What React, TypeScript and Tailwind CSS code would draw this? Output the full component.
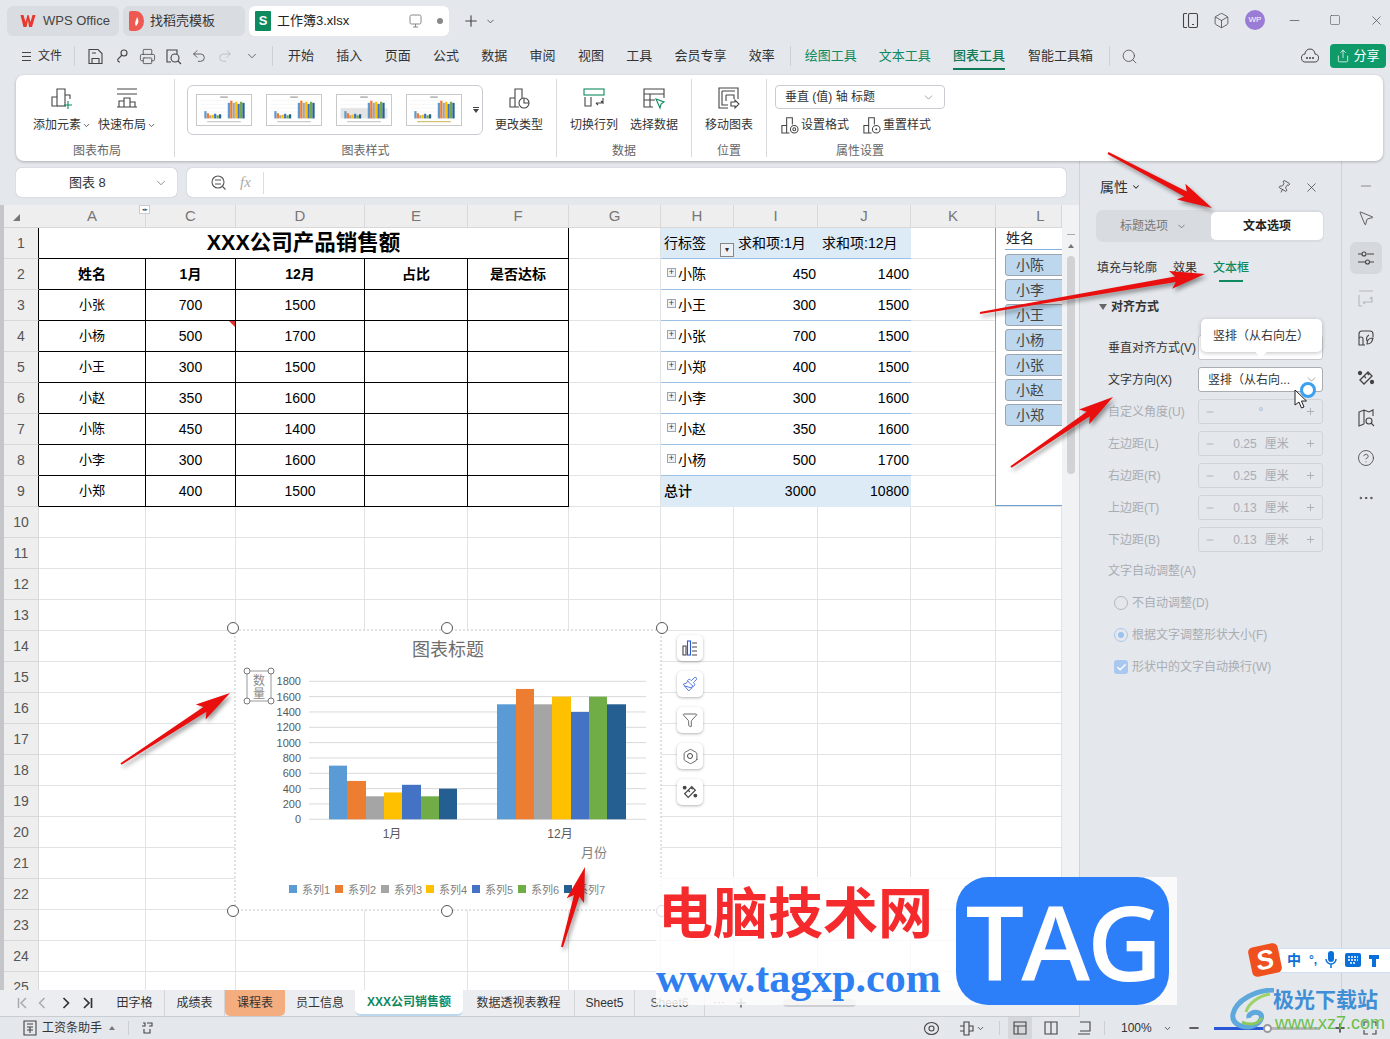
import React from 'react';
import { ChevronDown, Minus, Square, X, Search, Printer, Undo2, Redo2, Plus, Pin, MousePointer2, CircleHelp, Ellipsis, Funnel, Paintbrush, Hexagon, Share, Box, Check } from 'lucide-react';

const S = ({ w = 20, h = 20, vb = '0 0 20 20', c = 'currentColor', sw = 1.1, children, className = '' }: any) => (
  <svg width={w} height={h} viewBox={vb} fill="none" stroke={c} strokeWidth={sw} className={className}>{children}</svg>
);

const BarsBase = () => <path d="M2 20v-9h5v9zM7 11V3h8v17M15 9h5v4" />;
const AddEl = () => (
  <S w={24} h={24} vb="0 0 24 24" c="#444"><BarsBase /><path d="M7 20h9" /><path d="M18 15v8M14 19h8" stroke="#0f8a5f" /></S>
);
const Layout = () => (
  <S w={24} h={24} vb="0 0 24 24" c="#444"><path d="M2 3h20M2 8h20M2 21h20M4 21v-6h5v6M9 21V12h6v9M15 21v-5h5v5" /></S>
);
const ChangeType = () => (
  <S w={24} h={24} vb="0 0 24 24" c="#444"><path d="M3 21v-9h5v9zM8 12V3h7v9M8 21h4" /><circle cx="17" cy="17" r="5" /><path d="M17 12v5h5" /></S>
);
const SwitchRC = () => (
  <S w={24} h={24} vb="0 0 24 24" c="#444"><rect x="2" y="3" width="20" height="6" stroke="#0f8a5f" /><path d="M3 11v9h6v-9M14 17h7l-2-2M21 17v-5M14 17l2 2" /></S>
);
const SelectData = () => (
  <S w={24} h={24} vb="0 0 24 24" c="#444"><path d="M11 21H2V3h20v9M2 8h20M2 14h11M8 8v13" /><path d="M14 13l8 3-3 2-1 4z" stroke="#0f8a5f" /></S>
);
const MoveChart = () => (
  <S w={24} h={24} vb="0 0 24 24" c="#444"><path d="M11 22H2V2h19v11M5 5h13M5 5v14h6M9 9h8v4M9 9v6" /><path d="M14 16h4v-2l4 4-4 4v-2h-4z" /></S>
);
const SmallSet = ({ reset }: { reset?: boolean }) => (
  <S w={19} h={19} vb="0 0 20 20" c="#444"><path d="M2 19v-8h5v8zM7 11V3h6v7M7 19h3" /><circle cx="15" cy="15" r="4" /><circle cx="15" cy="15" r={reset ? 0.5 : 1.5} /></S>
);

const Thumb = ({ v }: { v: number }) => {
  const a = [700, 500, 300, 350, 450, 300, 400];
  const b = [1500, 1700, 1500, 1600, 1400, 1600, 1500];
  const c = ['#5b9bd5', '#ed7d31', '#a5a5a5', '#ffc000', '#4472c4', '#70ad47', '#255e91'];
  return (
    <svg width="56" height="32" viewBox="0 0 56 32" className="border border-[#c9c9c9] bg-white">
      <rect x="24" y="1.5" width="8" height="1.5" fill="#aaa" />
      {[6, 10, 14, 18, 22].map((y) => <line key={y} x1="3" x2="53" y1={y} y2={y} stroke="#eee" strokeWidth="0.5" />)}
      {v === 2 && <rect x="3" y="14" width="50" height="11" fill="#e4e4e4" />}
      {a.map((n, i) => <rect key={i} x={7 + i * 2.6} y={25 - n / 90} width="2.4" height={n / 90} fill={c[i]} />)}
      {b.map((n, i) => <rect key={i} x={32 + i * 2.6} y={25 - n / 90} width="2.4" height={n / 90} fill={c[i]} />)}
      <rect x="10" y="28" width="36" height="1" fill={v === 3 ? '#c8b040' : '#bbb'} />
    </svg>
  );
};

const Sep = ({ className = '' }: { className?: string }) => <div className={`w-px bg-[#cdd0d5] ${className}`} />;

const TopBar = () => (
  <div className="h-[42px] flex items-start pt-[6px] pl-[7px] relative">
    <div className="w-[112px] h-[30px] rounded-[6px] bg-[#d9dce0] flex items-center pl-[13px] gap-[7px] text-[13px] text-[#444]">
      <svg width="16" height="14" viewBox="0 0 16 14"><path d="M0.5 1h3l2 7 2-7h1l2 7 2-7h3l-3.5 12h-3L8 6l-1.500 7h-3z" fill="#e8372c" /></svg>
      <span>WPS Office</span>
    </div>
    <div className="w-[122px] h-[30px] ml-[4px] rounded-[6px] bg-[#d9dce0] flex items-center pl-[6px] gap-[6px] text-[13px] text-[#333]">
      <svg width="15" height="20" viewBox="0 0 15 20"><path d="M0 2a2 2 0 0 1 2-2h5a8 10 0 0 1 0 20H2a2 2 0 0 1-2-2z" fill="#ee5a52" /><path d="M7 15c-2-3 0-5 1-9 2 3 2 6-1 9z" fill="#fff" /></svg>
      <span>找稻壳模板</span>
    </div>
    <div className="w-[200px] h-[30px] ml-[4px] rounded-[6px] bg-white flex items-center pl-[6px] text-[13px] text-[#222]">
      <div className="w-[16px] h-[20px] bg-[#0f8a5f] text-white text-[13px] font-bold flex items-center justify-center rounded-[1px]">S</div>
      <span className="ml-[6px]">工作簿3.xlsx</span>
      <svg className="ml-[60px]" width="13" height="14" viewBox="0 0 13 14" fill="none" stroke="#888"><rect x="1" y="1" width="11" height="9" rx="1.500" /><path d="M6.500 10v3M4 13h5" /></svg>
      <div className="ml-[15px] w-[6px] h-[6px] rounded-full bg-[#888]" />
    </div>
    <Plus className="ml-[13px] mt-[6px] text-[#444]" size={18} strokeWidth={1.5} />
    <ChevronDown className="ml-[5px] mt-[10px] text-[#555]" size={11} />
    <div className="ml-auto flex items-center text-[#444] h-[28px]">
      <S w={17} h={17} vb="0 0 17 17"><path d="M5 1.500H2.500a1 1 0 0 0-1 1v12a1 1 0 0 0 1 1H5" /><rect x="6.500" y="1.500" width="9" height="14" rx="1.500" /><path d="M10 12.500h2" /></S>
      <Box className="ml-[14px]" size={17} strokeWidth={1.1} />
      <div className="ml-[15px] w-[20px] h-[20px] rounded-full bg-[#9a7bd6] text-white text-[8px] flex items-center justify-center">WP</div>
      <Minus className="ml-[22px]" size={15} strokeWidth={1.1} />
      <Square className="ml-[27px]" size={12} strokeWidth={1.1} />
      <X className="ml-[28px] mr-[6px]" size={15} strokeWidth={1.1} />
    </div>
  </div>
);

const MenuBar = () => (
  <div className="h-[33px] flex items-center text-[13px] text-[#333] pb-[5px]">
    <div className="ml-[22px] w-[9px] flex flex-col gap-[3px]">
      <div className="h-px bg-[#444] w-[9px]" /><div className="h-px bg-[#444] w-[9px]" /><div className="h-px bg-[#444] w-[9px]" />
    </div>
    <span className="ml-[7px] text-[12px]">文件</span>
    <Sep className="h-[20px] ml-[12px]" />
    <div className="flex items-center gap-[9px] ml-[12px] text-[#444]">
      <S w={17} h={17} vb="0 0 17 17" c="#444"><path d="M2 1.500h9l4 4v10H2zM5 15.500v-5h7v5M5 5h4" /></S>
      <S w={17} h={17} vb="0 0 17 17" c="#444"><circle cx="11" cy="5" r="3" /><path d="M9 7l-4 4a2 2 0 0 0 2 3" /></S>
      <Printer size={17} strokeWidth={1.1} />
      <S w={17} h={17} vb="0 0 17 17" c="#444"><path d="M6 14H2V2h10v4" /><circle cx="10" cy="10" r="4" /><path d="M13 13l3 3" /></S>
      <Undo2 size={16} strokeWidth={1.2} />
      <Redo2 size={16} strokeWidth={1.2} className="text-[#b5b8bc] ml-[1px]" />
      <ChevronDown size={14} strokeWidth={1.3} className="ml-[3px]" />
    </div>
    <Sep className="h-[20px] ml-[13px]" />
    <div className="flex items-center gap-[22.3px] ml-[15px]">
      <span>开始</span><span>插入</span><span>页面</span><span>公式</span><span>数据</span><span>审阅</span><span>视图</span><span>工具</span><span>会员专享</span><span>效率</span>
    </div>
    <Sep className="h-[20px] ml-[15px]" />
    <div className="flex items-center gap-[22px] ml-[14px]">
      <span className="text-[#0f8a5f]">绘图工具</span>
      <span className="text-[#0f8a5f]">文本工具</span>
      <span className="text-[#0f7a55] font-medium relative">图表工具<span className="absolute left-0 right-0 -bottom-[4px] h-[2px] bg-[#0f7a55]" /></span>
      <span className="ml-px">智能工具箱</span>
    </div>
    <Sep className="h-[20px] ml-[16px]" />
    <Search className="ml-[11px] text-[#444]" size={17} strokeWidth={1.1} />
    <svg className="ml-[163px]" width="18" height="16" viewBox="0 0 18 16" fill="none" stroke="#444"><path d="M5 14a4 4 0 0 1-1-8 5 5 0 0 1 10 0 4 4 0 0 1-1 8z" /><circle cx="6" cy="10" r=".6" fill="#444" /><circle cx="9" cy="10" r=".6" fill="#444" /><circle cx="12" cy="10" r=".6" fill="#444" /></svg>
    <div className="ml-[11px] w-[56px] h-[24px] rounded-[4px] bg-[#0e9a69] text-white flex items-center justify-center gap-[3px]">
      <Share size={14} strokeWidth={1.3} /><span className="text-[13px]">分享</span>
    </div>
  </div>
);

const RB = ({ icon, label, caret, w }: any) => (
  <div className={`flex flex-col items-center ${w}`}>
    <div className="h-[24px] mt-[7px]">{icon}</div>
    <div className="mt-[6px] text-[12px] leading-[18px] text-[#333] flex items-center whitespace-nowrap">{label}{caret && <ChevronDown size={9} strokeWidth={2} className="ml-[1px]" />}</div>
  </div>
);

const GroupLabel = ({ children }: any) => (
  <div className="h-[16px] text-center text-[12px] text-[#666] leading-[16px] whitespace-nowrap">{children}</div>
);

const Group = ({ w, label, children, cls = '' }: any) => (
  <div className={`${w} h-[78px] flex flex-col relative border-r border-[#d8dade]`}>
    <div className="h-[64px] shrink-0 flex">{children}</div>
    <div className={cls}><GroupLabel>{label}</GroupLabel></div>
  </div>
);

const Ribbon = () => (
  <div className="relative z-10 ml-[16px] mr-[7px] h-[86px] bg-white rounded-[8px] shadow-[0_1px_3px_rgba(0,0,0,0.25)] flex py-[4px]">
    <Group w="w-[159px]" label="图表布局" cls="pl-[4px]">
      <div className="flex pl-[16px]">
        <RB icon={<AddEl />} label="添加元素" caret w="w-[60px]" />
        <RB icon={<Layout />} label="快速布局" caret w="w-[70px]" />
      </div>
    </Group>
    <Group w="w-[382px]" label="图表样式">
      <div className="ml-[12px] mt-[6px] w-[296px] h-[50px] border border-[#c9ccd1] rounded-[6px] flex items-center pl-[8px] gap-[14px] relative">
        <Thumb v={0} /><Thumb v={1} /><Thumb v={2} /><Thumb v={3} />
        <div className="absolute right-[3px] top-[21px] flex flex-col items-center">
          <div className="w-[6px] h-px bg-[#444] mb-[1px]" />
          <div className="w-0 h-0 border-l-[3px] border-r-[3px] border-t-[4px] border-l-transparent border-r-transparent border-t-[#444]" />
        </div>
      </div>
      <RB icon={<ChangeType />} label="更改类型" w="w-[72px]" />
    </Group>
    <Group w="w-[135px]" label="数据">
      <div className="flex pl-[7px]">
        <RB icon={<SwitchRC />} label="切换行列" w="w-[60px]" />
        <RB icon={<SelectData />} label="选择数据" w="w-[60px]" />
      </div>
    </Group>
    <Group w="w-[75px]" label="位置">
      <RB icon={<MoveChart />} label="移动图表" w="w-full" />
    </Group>
    <div className="w-[190px] h-[78px] flex flex-col">
      <div className="h-[64px] shrink-0 pl-[8px] pt-[6px]">
        <div className="w-[170px] h-[24px] border border-[#c9ccd1] rounded-[4px] flex items-center justify-between px-[9px] text-[12px] text-[#333]">
          <span>垂直 (值) 轴 标题</span><ChevronDown size={13} strokeWidth={1.1} className="text-[#666]" />
        </div>
        <div className="flex items-center mt-[6px] text-[12px] text-[#333] pl-[5px]">
          <SmallSet /><span className="ml-[2px]">设置格式</span>
          <span className="ml-[13px]"><SmallSet reset /></span><span className="ml-[2px]">重置样式</span>
        </div>
      </div>
      <div className="-ml-[4px]"><GroupLabel>属性设置</GroupLabel></div>
    </div>
  </div>
);

const COLS = ['A', 'C', 'D', 'E', 'F', 'G', 'H', 'I', 'J', 'K', 'L'];
const TABLE = [
  ['小张', '700', '1500'], ['小杨', '500', '1700'], ['小王', '300', '1500'], ['小赵', '350', '1600'],
  ['小陈', '450', '1400'], ['小李', '300', '1600'], ['小郑', '400', '1500'],
];
const PIVOT = [
  ['小陈', '450', '1400'], ['小王', '300', '1500'], ['小张', '700', '1500'], ['小郑', '400', '1500'],
  ['小李', '300', '1600'], ['小赵', '350', '1600'], ['小杨', '500', '1700'],
];

const Sheet = () => {
  const cells: React.ReactNode[] = [];
  const g = 'border-r border-b border-[#e2e3e5]';
  const bk = 'border-r border-b border-black';
  cells.push(
    <div key="corner" className="bg-[#eeeeee] flex items-center justify-center border-b border-[#d5d5d5]">
      <div className="w-0 h-0 border-l-[7px] border-b-[7px] border-l-transparent border-b-[#777] mr-[10px] mt-[2px]" />
    </div>,
  );
  COLS.forEach((c) =>
    cells.push(
      <div key={c} className={`bg-[#eeeeee] border-r border-b border-[#d8d8d8] flex items-center justify-center text-[15px] text-[#777] relative ${c === 'L' ? 'pl-[24px]' : ''}`}>
        {c}
        {c === 'A' && <div className="absolute -right-[5px] top-0 w-[11px] h-[9px] bg-white border border-[#ccc] flex items-center justify-center text-[5px] text-[#444] leading-none z-10">◂▸</div>}
      </div>,
    ),
  );
  for (let r = 1; r <= 25; r++) {
    const inTable = r <= 9;
    cells.push(
      <div key={`r${r}`} className={`bg-[#eeeeee] flex items-center justify-center text-[14px] text-[#555] border-b border-[#d8d8d8] ${inTable ? 'border-r border-r-black' : 'border-r border-r-[#d8d8d8]'}`}>{r}</div>,
    );
    if (r === 1) {
      cells.push(<div key="title" className={`col-span-5 ${bk} flex items-center justify-center text-[21.5px] font-bold text-black`}>XXX公司产品销售额</div>);
    } else if (r === 2) {
      ['姓名', '1月', '12月', '占比', '是否达标'].forEach((t) => cells.push(<div key={t} className={`${bk} flex items-center justify-center text-[14px] font-bold text-black`}>{t}</div>));
    } else if (inTable) {
      const row = TABLE[r - 3];
      row.forEach((t, i) =>
        cells.push(
          <div key={`${r}-${i}`} className={`${bk} flex items-center justify-center ${i === 0 ? 'text-[13px]' : 'text-[14px]'} text-black relative`}>
            {t}
            {r === 4 && i === 1 && <div className="absolute right-0 top-0 w-0 h-0 border-l-[6px] border-t-[6px] border-l-transparent border-t-[#e03030]" />}
          </div>,
        ),
      );
      cells.push(<div key={`${r}-e`} className={bk} />, <div key={`${r}-f`} className={bk} />);
    } else {
      for (let i = 0; i < 5; i++) cells.push(<div key={`${r}-t${i}`} className={g} />);
    }
    cells.push(<div key={`${r}-g`} className={g} />);
    const pb = 'border-b border-[#9bc2e6]';
    if (r === 1) {
      cells.push(
        <div key="ph" className={`bg-[#ddebf7] ${pb} flex items-center pl-[3px] text-[14px] text-black relative`}>行标签
          <div className="absolute right-0 bottom-[1px] w-[14px] h-[14px] border border-[#888] bg-[#eef1f5] text-[8px] leading-[12px] text-center text-[#333]">▾</div>
        </div>,
        <div key="pi" className={`bg-[#ddebf7] ${pb} flex items-center pl-[4px] text-[14px] text-black`}>求和项:1月</div>,
        <div key="pj" className={`bg-[#ddebf7] ${pb} flex items-center pl-[4px] text-[14px] text-black`}>求和项:12月</div>,
      );
    } else if (r <= 8) {
      const p = PIVOT[r - 2];
      cells.push(
        <div key={`${r}-ph`} className={`${pb} flex items-center text-[14px] text-black pl-[6px]`}>
          <span className="w-[9px] h-[9px] border border-[#9aa5b5] bg-[#eef2f8] mr-[2px] mb-[4px] flex items-center justify-center text-[9px] leading-none text-[#334]">+</span>{p[0]}
        </div>,
        <div key={`${r}-pi`} className={`${pb} flex items-center justify-end pr-[2px] text-[14px] text-black`}>{p[1]}</div>,
        <div key={`${r}-pj`} className={`${pb} flex items-center justify-end pr-[2px] text-[14px] text-black`}>{p[2]}</div>,
      );
    } else if (r === 9) {
      cells.push(
        <div key="tot" className="bg-[#ddebf7] flex items-center pl-[3px] text-[14px] font-medium text-black">总计</div>,
        <div key="toti" className="bg-[#ddebf7] flex items-center justify-end pr-[2px] text-[14px] text-black">3000</div>,
        <div key="totj" className="bg-[#ddebf7] flex items-center justify-end pr-[2px] text-[14px] text-black">10800</div>,
      );
    } else {
      cells.push(<div key={`${r}-h`} className={g} />, <div key={`${r}-i`} className={g} />, <div key={`${r}-j`} className={g} />);
    }
    cells.push(<div key={`${r}-k`} className={g} />, <div key={`${r}-l`} className={g} />);
  }
  return (
    <div className="flex h-[785px] overflow-hidden">
      <div className="w-[4px] bg-[#c4c6c9] shrink-0" />
      <div className="w-[1058px] bg-white grid grid-cols-[35px_107px_90px_129px_103px_101px_92px_73px_84px_93px_85px_66px] grid-rows-[23px] auto-rows-[31px]">
        {cells}
      </div>
      <div className="w-[17px] bg-[#f1f2f3] flex flex-col items-center pt-[29px]">
        <div className="w-[8px] h-px bg-[#aaa]" />
        <div className="mt-[9px] w-0 h-0 border-l-[3px] border-r-[3px] border-b-[4px] border-l-transparent border-r-transparent border-b-[#777]" />
        <div className="mt-[8px] w-[8px] h-[218px] rounded-full bg-[#d0d2d5]" />
      </div>
    </div>
  );
};

const FormulaBar = () => (
  <div className="pt-[7px] pl-[16px] pr-[13px] flex gap-[10px] h-[44px]">
    <div className="w-[161px] h-[29px] bg-white rounded-[5px] shadow-[0_0_1px_rgba(0,0,0,0.4)] flex items-center text-[13px] text-[#333] relative">
      <span className="ml-[53px]">图表 8</span>
      <ChevronDown size={14} strokeWidth={1.1} className="absolute right-[9px] text-[#555]" />
    </div>
    <div className="flex-1 h-[29px] bg-white rounded-[5px] shadow-[0_0_1px_rgba(0,0,0,0.4)] flex items-center pl-[23px]">
      <S w={17} h={17} vb="0 0 17 17" c="#555"><circle cx="8" cy="8" r="6" /><path d="M12.500 12.500l3 3M5 6h6M5 10h6" /></S>
      <span className="ml-[13px] italic text-[15px] text-[#aaa] [font-family:'Liberation_Serif',serif]">fx</span>
      <div className="ml-[12px] h-[22px] w-px bg-[#ddd]" />
    </div>
  </div>
);

const Tab = ({ w, children, cls = '' }: any) => (
  <div className={`${w} h-[26px] flex items-center justify-center text-[12px] text-[#333] border-r border-[#d3d5d9] whitespace-nowrap ${cls}`}>{children}</div>
);

const TabBar = () => (
  <div className="h-[27px] bg-[#ebedf0] border-b border-[#c9ccd0] flex items-start">
    <div className="w-[105px] h-[26px] flex items-center pl-[17px] text-[#333]">
      <S w={10} h={12} vb="0 0 10 12" c="#aaa" sw={1.5}><path d="M1.500 1v10M9 1L4 6l5 5" /></S>
      <S w={8} h={12} vb="0 0 8 12" c="#aaa" sw={1.5} className="ml-[11px]"><path d="M6.500 1L1.500 6l5 5" /></S>
      <S w={8} h={12} vb="0 0 8 12" sw={1.7} className="ml-[16px]"><path d="M1.500 1l5 5-5 5" /></S>
      <S w={10} h={12} vb="0 0 10 12" sw={1.7} className="ml-[13px]"><path d="M1 1l5 5-5 5M8.500 1v10" /></S>
    </div>
    <Tab w="w-[60px]">田字格</Tab>
    <Tab w="w-[60px]">成绩表</Tab>
    <Tab w="w-[60px]" cls="bg-[#f4ad7f] rounded-b-[5px] border-r-0">课程表</Tab>
    <Tab w="w-[70px]" cls="border-r-0">员工信息</Tab>
    <div className="w-[108px] h-[26px] bg-white rounded-b-[6px] border-b-2 border-[#bcd7ee] flex items-center justify-center text-[12px] font-bold text-[#0f8a5f] whitespace-nowrap">XXX公司销售额</div>
    <Tab w="w-[112px]">数据透视表教程</Tab>
    <Tab w="w-[60px]">Sheet5</Tab>
    <Tab w="w-[70px]" cls="text-[#555]">Sheet6</Tab>
    <span className="ml-[8px] mt-[3px] text-[12px] text-[#555]">···</span>
    <Plus className="ml-[9px] mt-[6px] text-[#444]" size={14} />
    <div className="ml-[35px] mt-[9px] w-[73px] h-[8px] rounded-full bg-[#cdcfd2]" />
  </div>
);

const Panel = () => {
  const dis = 'text-[#a9adb3]';
  const Row = ({ label, val }: any) => (
    <div className="flex items-center h-[25px]">
      <div className={`w-[90px] text-[12px] whitespace-nowrap ${dis}`}>{label}</div>
      <div className={`w-[125px] h-[25px] border border-[#d0d3d8] rounded-[3px] flex items-center justify-between px-[6px] text-[12px] ${dis}`}>
        <Minus size={10} /><span className="flex items-center gap-[8px] ml-[2px]">{val}</span><Plus size={11} />
      </div>
    </div>
  );
  return (
    <div className="w-[262px] border-l border-[#cfd2d6] pl-[16px] pr-[17px] text-[#333] relative">
      <div className="mt-[14px] h-[24px] flex items-center pr-[2px]">
        <span className="text-[14px] ml-[4px]">属性</span>
        <ChevronDown size={10} strokeWidth={2.5} className="ml-[3px]" />
        <Pin size={14} strokeWidth={1.2} className="ml-auto rotate-[30deg]" />
        <X size={15} strokeWidth={1.1} className="ml-[13px] mr-[3px]" />
      </div>
      <div className="mt-[11px] h-[32px] bg-[#d8dbe0] rounded-[7px] flex items-center pr-[1px]">
        <div className="w-[115px] flex items-center justify-center text-[12px] text-[#777]">标题选项<ChevronDown size={11} className="ml-[8px]" /></div>
        <div className="flex-1 h-[28px] bg-white rounded-[5px] flex items-center justify-center text-[12px] font-bold text-[#222]">文本选项</div>
      </div>
      <div className="mt-[14px] h-[26px] flex text-[12px] items-start pl-[1px] leading-[24px]">
        <span>填充与轮廓</span>
        <span className="ml-[16px]">效果</span>
        <span className="ml-[16px] relative text-[#0f8a5f] font-medium">文本框<span className="absolute left-[6px] right-[6px] top-[24px] h-[2px] bg-[#0f8a5f]" /></span>
      </div>
      <div className="mt-[15px] h-[20px] flex items-center text-[12px] font-bold pl-[3px]">
        <span className="w-0 h-0 border-l-[4px] border-r-[4px] border-t-[6px] border-l-transparent border-r-transparent border-t-[#666] mr-[4px]" />对齐方式
      </div>
      <div className="mt-[18px] flex flex-col gap-[7px] pl-[12px]">
        <div className="flex items-center h-[25px]">
          <div className="w-[90px] text-[12px] whitespace-nowrap">垂直对齐方式(V)</div>
          <div className="w-[125px] h-[25px] border border-[#c4c7cc] rounded-[3px] bg-white" />
        </div>
        <div className="flex items-center h-[25px]">
          <div className="w-[90px] text-[12px] whitespace-nowrap">文字方向(X)</div>
          <div className="w-[125px] h-[25px] border border-[#a9acb1] rounded-[3px] bg-white flex items-center justify-between pl-[9px] pr-[4px] text-[12px] whitespace-nowrap">
            竖排（从右向...<ChevronDown size={13} strokeWidth={1.1} className="text-[#666]" />
          </div>
        </div>
        <Row label="自定义角度(U)" val="°" />
        <Row label="左边距(L)" val={<><span>0.25</span><span>厘米</span></>} />
        <Row label="右边距(R)" val={<><span>0.25</span><span>厘米</span></>} />
        <Row label="上边距(T)" val={<><span>0.13</span><span>厘米</span></>} />
        <Row label="下边距(B)" val={<><span>0.13</span><span>厘米</span></>} />
      </div>
      <div className={`mt-[9px] h-[20px] pl-[12px] text-[12px] leading-[20px] ${dis}`}>文字自动调整(A)</div>
      <div className={`mt-[12px] pl-[18px] flex flex-col gap-[12px] text-[12px] ${dis}`}>
        <div className="h-[20px] flex items-center gap-[4px]"><span className="w-[14px] h-[14px] rounded-full border border-[#b4b7bc]" />不自动调整(D)</div>
        <div className="h-[20px] flex items-center gap-[4px]"><span className="w-[14px] h-[14px] rounded-full border border-[#a8c8f0] flex items-center justify-center"><span className="w-[6px] h-[6px] rounded-full bg-[#9cc2f0]" /></span>根据文字调整形状大小(F)</div>
        <div className="h-[20px] flex items-center gap-[4px]"><span className="w-[14px] h-[14px] rounded-[3px] bg-[#a8c8f0] flex items-center justify-center"><Check size={11} strokeWidth={3} className="text-white" /></span>形状中的文字自动换行(W)</div>
      </div>
      <div className="absolute left-[121px] top-[158px] w-[121px] h-[33px] bg-white rounded-[5px] shadow-[0_1px_4px_rgba(0,0,0,0.25)] flex items-center pl-[12px] text-[12px] text-[#333] z-10">竖排（从右向左）
        <div className="absolute left-[56px] -bottom-[4px] w-[8px] h-[8px] bg-white rotate-45" />
      </div>
    </div>
  );
};

const Rail = () => (
  <div className="w-[49px] border-l border-[#cfd2d6] flex flex-col items-center text-[#444]">
    <div className="mt-[9px] h-[32px] flex items-center"><Minus size={16} strokeWidth={1.2} className="text-[#777]" /></div>
    <div className="h-[32px] flex items-center"><MousePointer2 size={18} strokeWidth={1.1} /></div>
    <div className="mt-[8px] flex flex-col gap-[8px] items-center">
      <div className="w-[32px] h-[32px] rounded-[6px] bg-[#d5d8dd] flex items-center justify-center">
        <S w={18} h={18} vb="0 0 18 18" c="#444"><path d="M1 5h4M10 5h7M1 13h7M13 13h4" /><circle cx="7" cy="5" r="2" /><circle cx="10.500" cy="13" r="2" /></S>
      </div>
      <div className="w-[32px] h-[32px] flex items-center justify-center">
        <S w={18} h={18} vb="0 0 18 18" c="#b5b8bd"><path d="M2 2h14M2 6v11M2 17h3M6 13h9v-5M6 13l2 2M15 8l-2 2" /></S>
      </div>
      <div className="w-[32px] h-[32px] flex items-center justify-center">
        <S w={18} h={18} vb="0 0 18 18"><path d="M8 16H2V5a3 3 0 0 1 3-3h8a3 3 0 0 1 3 3v3M2 10a2 2 0 0 1 4 0v6M10 15c0-4 2-6 6-6-1 4-2 6-6 6zM12 6c-2 1-3 3-2 6" /></S>
      </div>
      <div className="w-[32px] h-[32px] flex items-center justify-center">
        <S w={18} h={18} vb="0 0 18 18" sw={1.3}><path d="M3 11l8-8 4 4-8 8zM7 7l2 2M10 4l2 2" /><circle cx="3" cy="4" r="1.500" fill="currentColor" /><circle cx="15" cy="13" r="1.500" fill="currentColor" /></S>
      </div>
      <div className="w-[32px] h-[32px] flex items-center justify-center">
        <S w={18} h={18} vb="0 0 18 18"><path d="M7 15L2 17V3l5-2 5 2 4-2v6M7 1v14" /><circle cx="12" cy="12" r="3" /><path d="M14 14l3 3" /></S>
      </div>
      <div className="w-[32px] h-[32px] flex items-center justify-center"><CircleHelp size={18} strokeWidth={1.1} /></div>
      <div className="w-[32px] h-[32px] flex items-center justify-center"><Ellipsis size={18} strokeWidth={1.3} /></div>
    </div>
  </div>
);

const StatusBar = () => (
  <div className="h-[22px] flex items-center text-[12px] text-[#333] relative">
    <S w={16} h={16} vb="0 0 16 16" c="#444" className="ml-[22px]"><path d="M2 1h12v14H2zM5 4h6M5 7h6M8 7v6M5 10h6" /></S>
    <span className="ml-[4px]">工资条助手</span>
    <span className="ml-[7px] w-0 h-0 border-l-[3px] border-r-[3px] border-b-[4px] border-l-transparent border-r-transparent border-b-[#777]" />
    <Sep className="h-[14px] ml-[13px]" />
    <S w={14} h={14} vb="0 0 14 14" c="#444" className="ml-[11px]"><path d="M3 2h2v3H2M7 2h5v3H9M4 8v4h6V8" /></S>
    <S w={17} h={17} vb="0 0 17 17" c="#444" className="ml-[769px]"><ellipse cx="8.500" cy="8.500" rx="7" ry="6" /><circle cx="8.500" cy="8.500" r="2.500" /></S>
    <S w={15} h={15} vb="0 0 15 15" c="#444" className="ml-[19px]"><path d="M5 1h5v13H5zM1 5h4v5H1M10 5h4v5h-4" /></S>
    <ChevronDown size={9} strokeWidth={2} className="ml-[2px]" />
    <Sep className="h-[14px] ml-[14px]" />
    <div className="ml-[8px] w-[24px] h-[22px] bg-[#d4d7db] flex items-center justify-center">
      <S w={14} h={14} vb="0 0 14 14" c="#444"><path d="M1 1h12v12H1zM1 5h12M5 5v8" /></S>
    </div>
    <S w={14} h={14} vb="0 0 14 14" c="#444" className="ml-[12px]"><path d="M1 1h12v12H1zM7 1v12" /></S>
    <S w={14} h={14} vb="0 0 14 14" c="#444" className="ml-[19px]"><path d="M3 1h10v9H3M1 13h12" /></S>
    <Sep className="h-[14px] ml-[13px]" />
    <span className="ml-[16px]">100%</span>
    <ChevronDown size={9} strokeWidth={2} className="ml-[11px]" />
    <Minus size={14} strokeWidth={2.5} className="ml-[15px]" />
    <div className="ml-[13px] w-[106px] h-[3px] bg-[#b5b7ba] relative">
      <div className="absolute left-0 top-0 h-[3px] w-[53px] bg-[#2a57d6]" />
      <div className="absolute left-[49px] -top-[3px] w-[9px] h-[9px] rounded-full bg-white border-2 border-[#999]" />
    </div>
    <Plus size={14} strokeWidth={2.5} className="ml-[13px]" />
    <S w={14} h={14} vb="0 0 14 14" c="#444" className="ml-[16px]"><path d="M1 5V1h4M9 1h4v4M13 9v4H9M5 13H1V9" /></S>
  </div>
);

const arrows: number[][] = [
  [1108, 153, 1212, 208], [980, 313, 1205, 274], [1011, 467, 1113, 397], [121, 764, 230, 693], [562, 947, 585, 867],
];
const arrowPts = ([x1, y1, x2, y2]: number[]) => {
  const dx = x2 - x1, dy = y2 - y1, l = Math.hypot(dx, dy), ux = dx / l, uy = dy / l, nx = -uy, ny = ux;
  const P = (d: number, o: number) => `${(x1 + ux * d + nx * o).toFixed(1)},${(y1 + uy * d + ny * o).toFixed(1)}`;
  const b = l - 30;
  return [P(0, 1), P(b, 2.8), P(b - 5, 9), P(l, 0), P(b - 5, -9), P(b, -2.8), P(0, -1)].join(' ');
};

const Chart = () => {
  const a = [700, 500, 300, 350, 450, 300, 400];
  const b = [1500, 1700, 1500, 1600, 1400, 1600, 1500];
  const c = ['#5b9bd5', '#ed7d31', '#a5a5a5', '#ffc000', '#4472c4', '#70ad47', '#255e91'];
  const xa = [329, 347, 366, 384, 402, 421, 439, 457];
  const xb = [497, 516, 534, 552, 571, 589, 607, 626];
  const y = (v: number) => 819.3 - (v / 1800) * 138;
  const handles = [[233, 628], [447, 628], [662, 628], [233, 911], [447, 911], [662, 911]];
  const legendX = [289, 335, 381, 426, 472, 518, 564];
  return (
    <svg className="absolute left-[226px] top-[620px]" width="444" height="300" viewBox="226 620 444 300">
      <rect x="235" y="630" width="426" height="280" fill="#fff" stroke="#c4c4c4" strokeDasharray="2 2" />
      <text x="448" y="656" textAnchor="middle" fontSize="18" fill="#6e6e6e">图表标题</text>
      {[0, 200, 400, 600, 800, 1000, 1200, 1400, 1600, 1800].map((v) => (
        <g key={v}>
          <line x1="309" x2="646" y1={y(v)} y2={y(v)} stroke="#d9d9d9" />
          <text x="301" y={y(v) + 4} textAnchor="end" fontSize="11" fill="#595959">{v}</text>
        </g>
      ))}
      {a.map((v, i) => <rect key={i} x={xa[i]} y={y(v)} width={xa[i + 1] - xa[i]} height={(v / 1800) * 138} fill={c[i]} />)}
      {b.map((v, i) => <rect key={i} x={xb[i]} y={y(v)} width={xb[i + 1] - xb[i]} height={(v / 1800) * 138} fill={c[i]} />)}
      <text x="392" y="838" textAnchor="middle" fontSize="12" fill="#595959">1月</text>
      <text x="560" y="838" textAnchor="middle" fontSize="12" fill="#595959">12月</text>
      <text x="594" y="857" textAnchor="middle" fontSize="13" fill="#7f7f7f">月份</text>
      {legendX.map((x, i) => (
        <g key={x}>
          <rect x={x} y="885" width="8" height="8" fill={c[i]} />
          <text x={x + 13} y="894" fontSize="11" fill="#7f7f7f">系列{i + 1}</text>
        </g>
      ))}
      <rect x="247" y="671" width="24" height="30" fill="#fff" stroke="#999" />
      <text x="259" y="685" textAnchor="middle" fontSize="12" fill="#8a8a8a">数</text>
      <text x="259" y="698" textAnchor="middle" fontSize="12" fill="#8a8a8a">量</text>
      {[[247, 671], [271, 671], [247, 701], [271, 701]].map(([cx, cy], i) => <circle key={i} cx={cx} cy={cy} r="3" fill="#fff" stroke="#777" />)}
      {handles.map(([cx, cy], i) => <circle key={i} cx={cx} cy={cy} r="5.500" fill="#fff" stroke="#555" />)}
    </svg>
  );
};

const ChartBtn = ({ children }: any) => (
  <div className="w-[26px] h-[26px] rounded-[5px] bg-white shadow-[0_1px_3px_rgba(0,0,0,0.3)] flex items-center justify-center text-[#444]">{children}</div>
);

const Watermark = () => (
  <div className="absolute left-[656px] top-[877px] w-[521px] h-[128px] bg-white/80 flex">
    <div className="w-[300px] flex flex-col">
      <div className="mt-[2px] pl-[2px] text-[55px] leading-[70px] font-bold text-[#f52a2d] whitespace-nowrap">电脑技术网</div>
      <div className="mt-[7px] text-[42px] leading-[44px] font-bold text-[#2f7ff0] [font-family:'Liberation_Serif',serif] whitespace-nowrap">www.tagxp.com</div>
    </div>
    <div className="w-[213px] h-[128px] bg-[#2d7ff9] rounded-[32px] flex items-center justify-center text-white text-[104px] font-semibold tracking-[-3px] [font-family:'Open_Sans',sans-serif]">TAG</div>
  </div>
);

export default function App() {
  return (
    <div className="relative w-[1390px] h-[1039px] overflow-hidden bg-[#e4e7ec] flex flex-col [font-family:'Liberation_Sans','Noto_Sans_CJK_SC',sans-serif]">
      <TopBar />
      <MenuBar />
      <Ribbon />
      <div className="flex h-[856px] shrink-0">
        <div className="w-[1079px] flex flex-col">
          <FormulaBar />
          <Sheet />
          <TabBar />
        </div>
        <Panel />
        <Rail />
      </div>
      <StatusBar />

      <div className="absolute left-[995px] top-[228px] w-[67px] h-[278px] bg-white border-l border-b border-[#6f9fd0] overflow-hidden pl-[9px]">
        <div className="h-[22px] border-b border-[#7fb0e0] text-[14px] leading-[20px] pl-[1px] text-[#222]">姓名</div>
        <div className="mt-[4px] flex flex-col gap-[3px]">
          {['小陈', '小李', '小王', '小杨', '小张', '小赵', '小郑'].map((n) => (
            <div key={n} className="w-[70px] h-[22px] bg-[#bdd7ee] border border-[#9aa5b1] rounded-[3px] text-[14px] leading-[20px] pl-[10px] text-[#444]">{n}</div>
          ))}
        </div>
      </div>

      <Chart />
      <div className="absolute left-[677px] top-[635px] flex flex-col gap-[10px]">
        <ChartBtn><S w={16} h={16} vb="0 0 16 16" c="#444"><path d="M1 6h3v9H1zM10 3h5M10 7h5M10 11h5M10 15h5" /><rect x="5.500" y="1" width="3" height="14" stroke="#2a57d6" /></S></ChartBtn>
        <ChartBtn><Paintbrush size={16} strokeWidth={1.2} className="text-[#2a57d6]" /></ChartBtn>
        <ChartBtn><Funnel size={16} strokeWidth={1.2} /></ChartBtn>
        <ChartBtn><div className="relative flex items-center justify-center"><Hexagon size={17} strokeWidth={1.1} /><div className="absolute w-[6px] h-[6px] rounded-full border border-[#444]" /></div></ChartBtn>
        <ChartBtn><S w={16} h={16} vb="0 0 18 18" sw={1.3}><path d="M3 11l8-8 4 4-8 8zM7 7l2 2M10 4l2 2" /><circle cx="3" cy="4" r="1.500" fill="currentColor" /><circle cx="15" cy="13" r="1.500" fill="currentColor" /></S></ChartBtn>
      </div>

      <div className="absolute left-[1300px] top-[382px] w-[16px] h-[16px] rounded-full border-[3px] border-[#3aa0f0] bg-white" />
      <svg className="absolute left-[1294px] top-[389px]" width="16" height="20" viewBox="0 0 16 20"><path d="M1 1v15l4-3 2.500 6 2.500-1-2.500-6h5z" fill="#fff" stroke="#222" /></svg>

      <Watermark />

      <svg className="absolute left-0 top-0 z-20 pointer-events-none drop-shadow-[2px_3px_2px_rgba(0,0,0,0.4)]" width="1390" height="1039" viewBox="0 0 1390 1039">
        {arrows.map((a, i) => <polygon key={i} points={arrowPts(a)} fill="#ea0f0f" />)}
      </svg>

      <div className="absolute left-[1250px] top-[945px] flex items-center">
        <div className="w-[30px] h-[30px] rounded-[5px] bg-[#f0501e] text-white text-[27px] font-black italic leading-[30px] text-center -rotate-12">S</div>
        <div className="w-[115px] h-[25px] bg-white border-y border-[#cfe0f2] flex items-center pl-[7px] gap-[8px] text-[14px] font-bold text-[#0a6fd8]">
          <span>中</span><span className="text-[12px]">°,</span>
          <svg width="12" height="18" viewBox="0 0 12 18" fill="#0a6fd8"><rect x="3" y="0" width="6" height="11" rx="3" /><path d="M1 8a5 5 0 0 0 10 0M6 13v4" fill="none" stroke="#0a6fd8" strokeWidth="1.500" /></svg>
          <svg width="16" height="14" viewBox="0 0 16 14"><rect width="16" height="14" rx="2" fill="#0a6fd8" /><path d="M3 4h10M3 7h10M5 10h6" stroke="#fff" strokeWidth="1.500" strokeDasharray="2 1" /></svg>
          <svg width="10" height="14" viewBox="0 0 10 14"><path d="M0 2h10v4H7v8H3V6H0z" fill="#0a6fd8" /></svg>
        </div>
      </div>

      <svg className="absolute left-[1230px] top-[988px]" width="48" height="46" viewBox="0 0 48 46" fill="none">
        <path d="M44 2C26 2 6 12 3 26c-2 11 12 15 20 12 8-3 11-10 6-13-5-2-11 1-10 5" stroke="#5fa8dc" strokeWidth="5" />
        <path d="M40 6C28 8 18 16 16 24" stroke="#9ed36a" strokeWidth="3" />
        <path d="M12 34c8 4 16 2 20-4" stroke="#8cc85a" strokeWidth="3" />
      </svg>
      <div className="absolute left-[1273px] top-[987px] text-[21px] leading-[26px] font-bold text-[#3f8fd6] whitespace-nowrap">极光下载站</div>
      <div className="absolute left-[1275px] top-[1012px] text-[18px] leading-[22px] text-[#6abf4b] whitespace-nowrap">www.xz7.com</div>
    </div>
  );
}
